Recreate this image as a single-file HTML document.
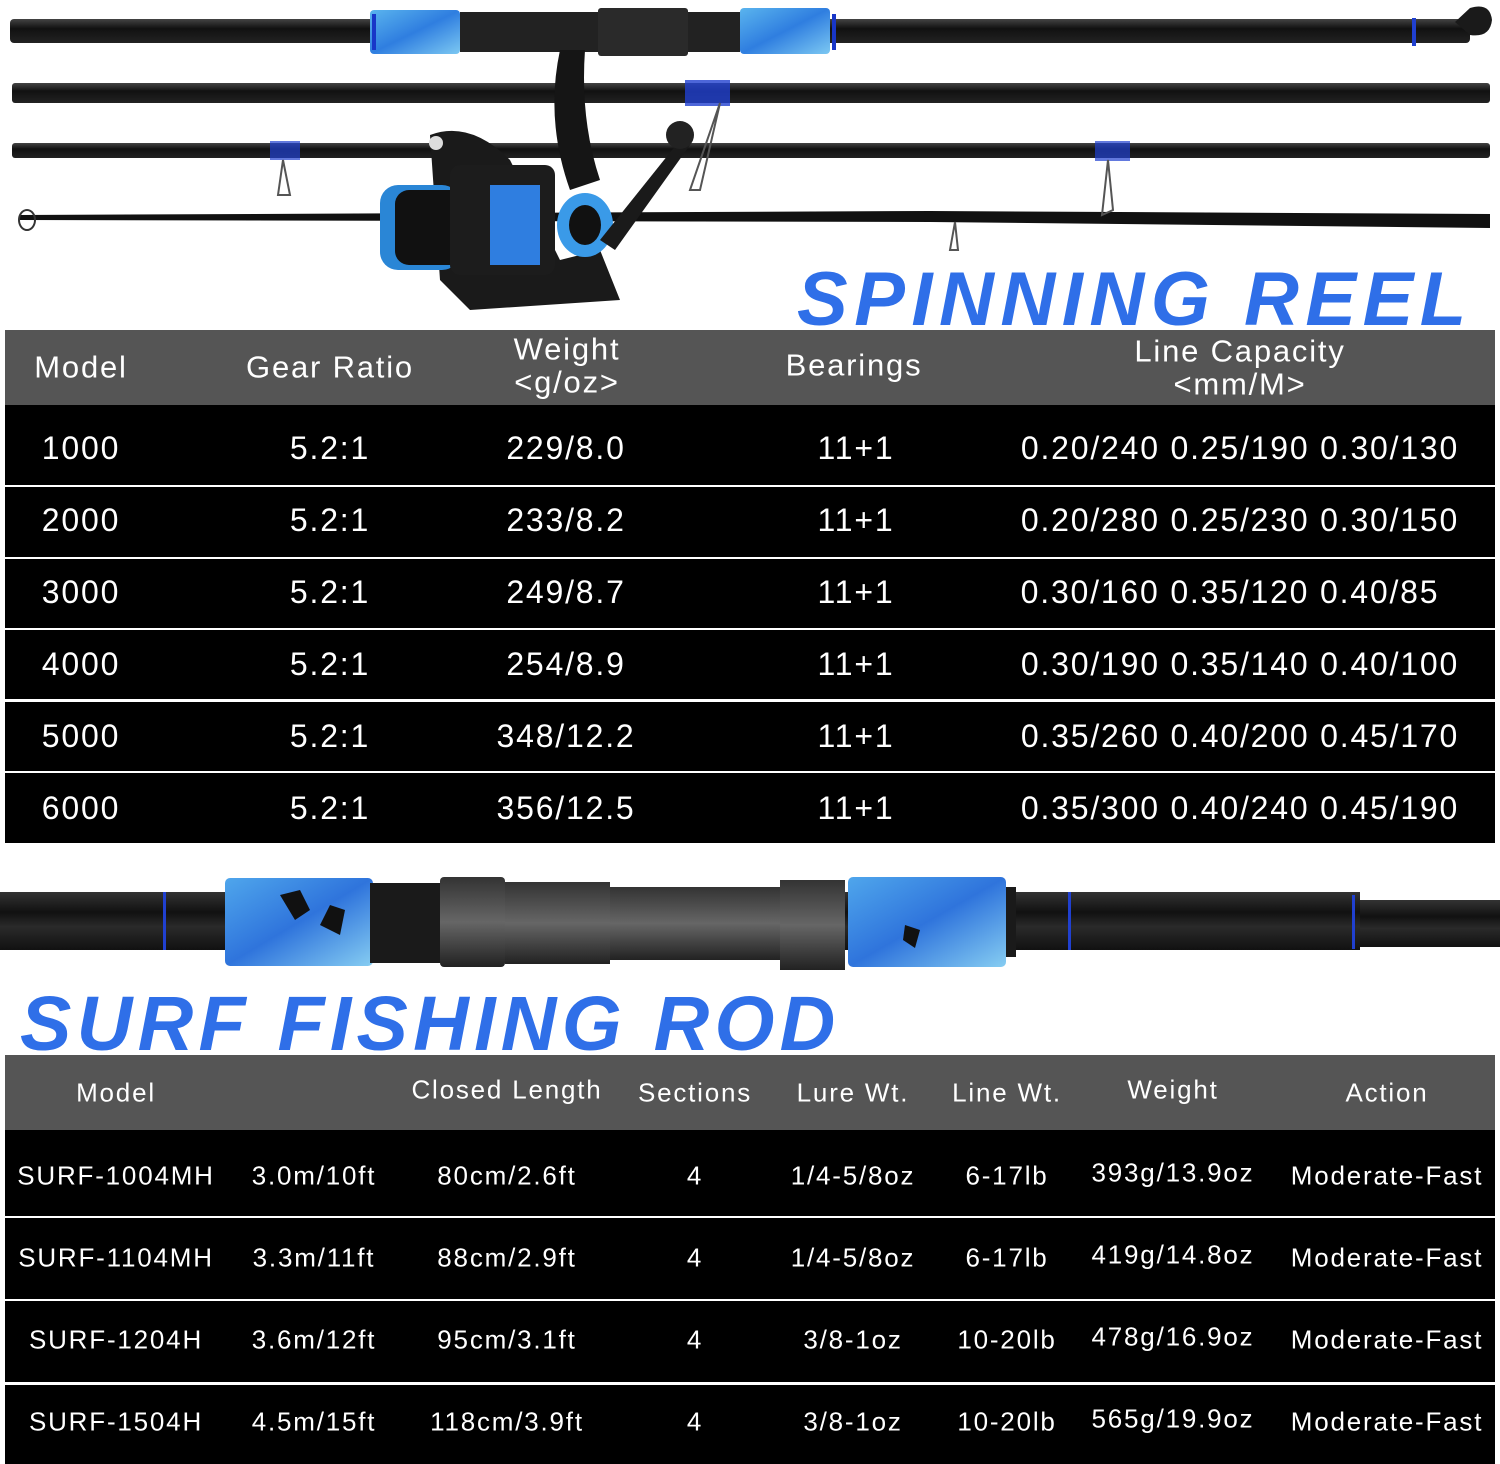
<!DOCTYPE html>
<html><head><meta charset="utf-8"><style>
*{margin:0;padding:0;box-sizing:border-box}
body{width:1500px;height:1464px;background:#fff;position:relative;overflow:hidden;font-family:"Liberation Sans",Arial,sans-serif}
.t{position:absolute;color:#fff;white-space:nowrap;text-align:center;transform:translate(-50%,-50%);line-height:1.05;letter-spacing:1.8px}
.bar{position:absolute;left:5px;width:1490px}
.title{position:absolute;color:#2f6fe8;font-weight:bold;font-style:italic;white-space:nowrap}
</style></head><body>
<svg width="1500" height="330" style="position:absolute;left:0;top:0">
<defs>
<linearGradient id="rg" x1="0" y1="0" x2="0" y2="1"><stop offset="0" stop-color="#444"/><stop offset=".4" stop-color="#111"/><stop offset="1" stop-color="#222"/></linearGradient>
<linearGradient id="bg" x1="0" y1="0" x2="1" y2="1"><stop offset="0" stop-color="#5ab4ee"/><stop offset=".5" stop-color="#2f7ee0"/><stop offset="1" stop-color="#7cc8f2"/></linearGradient>
</defs>
<rect x="10" y="19" width="1460" height="24" rx="4" fill="url(#rg)"/>
<path d="M1455 22 L1470 8 Q1490 2 1492 20 Q1490 38 1470 35 Z" fill="#1a1a1a"/>
<rect x="1412" y="18" width="4" height="28" fill="#2040d0"/>
<rect x="370" y="10" width="90" height="44" rx="4" fill="url(#bg)"/>
<rect x="460" y="12" width="280" height="40" fill="#222"/>
<rect x="598" y="8" width="90" height="48" rx="3" fill="#2a2a2a"/>
<rect x="740" y="8" width="90" height="46" rx="4" fill="url(#bg)"/>
<rect x="372" y="14" width="4" height="36" fill="#1836c8"/>
<rect x="832" y="14" width="4" height="36" fill="#1836c8"/>
<rect x="12" y="83" width="1478" height="20" rx="3" fill="url(#rg)"/>
<rect x="685" y="80" width="45" height="26" fill="#2040d0" opacity=".8"/>
<rect x="12" y="143" width="1478" height="15" rx="3" fill="url(#rg)"/>
<rect x="270" y="141" width="30" height="19" fill="#2040d0" opacity=".7"/>
<rect x="1095" y="141" width="35" height="20" fill="#2040d0" opacity=".7"/>
<path d="M20 215 L930 211 L1490 214 L1490 228 L930 222 L20 220 Z" fill="#111"/>
<ellipse cx="27" cy="220" rx="8" ry="10" fill="none" stroke="#333" stroke-width="2"/>
<path d="M283 160 L278 195 L290 195 Z M1108 160 L1102 215 L1113 210 Z M955 222 L950 250 L958 250 Z M720 103 L690 190 L700 190 Z" fill="none" stroke="#555" stroke-width="2"/>
<path d="M560 50 Q545 120 570 190 L600 180 Q580 120 585 50 Z" fill="#151515"/>
<path d="M430 135 Q470 120 510 160 L560 260 L600 250 L620 300 L470 310 L440 280 Z" fill="#1a1a1a"/>
<rect x="380" y="185" width="80" height="85" rx="18" fill="#2a86d6"/>
<rect x="395" y="190" width="70" height="75" rx="14" fill="#111"/>
<rect x="450" y="165" width="105" height="110" rx="10" fill="#1c1c1c"/>
<rect x="490" y="185" width="50" height="80" fill="#2f7ee0"/>
<ellipse cx="585" cy="225" rx="28" ry="32" fill="#3a9ae8"/>
<ellipse cx="585" cy="225" rx="16" ry="20" fill="#111"/>
<path d="M600 240 L680 140 L690 145 L615 250 Z" fill="#1a1a1a"/>
<circle cx="680" cy="135" r="14" fill="#222"/>
<circle cx="436" cy="143" r="7" fill="#ddd"/>
</svg>
<div class="title" style="left:797px;top:256px;font-size:76px;letter-spacing:6.5px">SPINNING REEL</div>

<div class="bar" style="top:330px;height:75px;background:#555"></div>
<div class="bar" style="top:405px;height:80px;background:#000"></div>
<div class="bar" style="top:487px;height:70px;background:#000"></div>
<div class="bar" style="top:559px;height:69px;background:#000"></div>
<div class="bar" style="top:630px;height:69px;background:#000"></div>
<div class="bar" style="top:702px;height:69px;background:#000"></div>
<div class="bar" style="top:773px;height:70px;background:#000"></div>

<div style="font-size:31px">
<div class="t" style="left:81px;top:368px">Model</div>
<div class="t" style="left:330px;top:368px">Gear Ratio</div>
<div class="t" style="left:567px;top:366px">Weight<br>&lt;g/oz&gt;</div>
<div class="t" style="left:854px;top:366px">Bearings</div>
<div class="t" style="left:1240px;top:368px">Line Capacity<br>&lt;mm/M&gt;</div>
</div>
<div style="font-size:32px">
<div class="t" style="left:81px;top:449px">1000</div><div class="t" style="left:330px;top:449px">5.2:1</div><div class="t" style="left:566px;top:449px">229/8.0</div><div class="t" style="left:856px;top:449px">11+1</div><div class="t" style="left:1240px;top:449px">0.20/240 0.25/190 0.30/130</div>
<div class="t" style="left:81px;top:521px">2000</div><div class="t" style="left:330px;top:521px">5.2:1</div><div class="t" style="left:566px;top:521px">233/8.2</div><div class="t" style="left:856px;top:521px">11+1</div><div class="t" style="left:1240px;top:521px">0.20/280 0.25/230 0.30/150</div>
<div class="t" style="left:81px;top:593px">3000</div><div class="t" style="left:330px;top:593px">5.2:1</div><div class="t" style="left:566px;top:593px">249/8.7</div><div class="t" style="left:856px;top:593px">11+1</div><div class="t" style="left:1230px;top:593px">0.30/160 0.35/120 0.40/85</div>
<div class="t" style="left:81px;top:665px">4000</div><div class="t" style="left:330px;top:665px">5.2:1</div><div class="t" style="left:566px;top:665px">254/8.9</div><div class="t" style="left:856px;top:665px">11+1</div><div class="t" style="left:1240px;top:665px">0.30/190 0.35/140 0.40/100</div>
<div class="t" style="left:81px;top:737px">5000</div><div class="t" style="left:330px;top:737px">5.2:1</div><div class="t" style="left:566px;top:737px">348/12.2</div><div class="t" style="left:856px;top:737px">11+1</div><div class="t" style="left:1240px;top:737px">0.35/260 0.40/200 0.45/170</div>
<div class="t" style="left:81px;top:809px">6000</div><div class="t" style="left:330px;top:809px">5.2:1</div><div class="t" style="left:566px;top:809px">356/12.5</div><div class="t" style="left:856px;top:809px">11+1</div><div class="t" style="left:1240px;top:809px">0.35/300 0.40/240 0.45/190</div>
</div>

<svg width="1500" height="110" style="position:absolute;left:0;top:865px">
<defs>
<linearGradient id="rg2" x1="0" y1="0" x2="0" y2="1"><stop offset="0" stop-color="#333"/><stop offset=".35" stop-color="#111"/><stop offset=".6" stop-color="#2a2a2a"/><stop offset="1" stop-color="#111"/></linearGradient>
<linearGradient id="gs" x1="0" y1="0" x2="0" y2="1"><stop offset="0" stop-color="#333"/><stop offset=".5" stop-color="#666"/><stop offset="1" stop-color="#222"/></linearGradient>
<linearGradient id="bg2" x1="0" y1="0" x2="1" y2="1"><stop offset="0" stop-color="#4fa6ec"/><stop offset=".5" stop-color="#2f74dc"/><stop offset="1" stop-color="#86cdf2"/></linearGradient>
</defs>
<rect x="0" y="27" width="1360" height="58" fill="url(#rg2)"/>
<rect x="1360" y="35" width="140" height="47" fill="url(#rg2)"/>
<rect x="163" y="27" width="3" height="58" fill="#2040d0"/>
<rect x="1068" y="27" width="3" height="58" fill="#2040d0"/>
<rect x="1352" y="30" width="3" height="54" fill="#2040d0"/>
<rect x="225" y="13" width="148" height="88" rx="5" fill="url(#bg2)"/>
<path d="M280 30 l20 -5 l10 20 l-15 10 Z M330 40 l15 5 l-5 25 l-20 -10 Z" fill="#111"/>
<rect x="370" y="18" width="70" height="80" fill="#1a1a1a"/>
<rect x="440" y="12" width="65" height="90" rx="4" fill="url(#gs)"/>
<rect x="505" y="17" width="105" height="82" fill="url(#gs)"/>
<rect x="610" y="22" width="170" height="73" fill="url(#gs)"/>
<rect x="780" y="15" width="65" height="90" fill="url(#gs)"/>
<rect x="848" y="12" width="158" height="90" rx="5" fill="url(#bg2)"/>
<path d="M905 60 l15 5 l-5 18 l-12 -8 Z" fill="#111"/>
<rect x="1006" y="22" width="10" height="70" fill="#1a1a1a"/>
</svg>

<div class="title" style="left:20px;top:980px;font-size:77px;letter-spacing:5.3px">SURF FISHING ROD</div>

<div class="bar" style="top:1055px;height:75px;background:#555"></div>
<div class="bar" style="top:1130px;height:86px;background:#000"></div>
<div class="bar" style="top:1218px;height:81px;background:#000"></div>
<div class="bar" style="top:1301px;height:81px;background:#000"></div>
<div class="bar" style="top:1385px;height:79px;background:#000"></div>

<div style="font-size:26px">
<div class="t" style="left:116px;top:1093px">Model</div>
<div class="t" style="left:507px;top:1090px">Closed Length</div>
<div class="t" style="left:695px;top:1093px">Sections</div>
<div class="t" style="left:853px;top:1093px">Lure Wt.</div>
<div class="t" style="left:1007px;top:1093px">Line Wt.</div>
<div class="t" style="left:1173px;top:1090px">Weight</div>
<div class="t" style="left:1387px;top:1093px">Action</div>

<div class="t" style="left:116px;top:1176px">SURF-1004MH</div><div class="t" style="left:314px;top:1176px">3.0m/10ft</div><div class="t" style="left:507px;top:1176px">80cm/2.6ft</div><div class="t" style="left:695px;top:1176px">4</div><div class="t" style="left:853px;top:1176px">1/4-5/8oz</div><div class="t" style="left:1007px;top:1176px">6-17lb</div><div class="t" style="left:1173px;top:1173px">393g/13.9oz</div><div class="t" style="left:1387px;top:1176px">Moderate-Fast</div>
<div class="t" style="left:116px;top:1258px">SURF-1104MH</div><div class="t" style="left:314px;top:1258px">3.3m/11ft</div><div class="t" style="left:507px;top:1258px">88cm/2.9ft</div><div class="t" style="left:695px;top:1258px">4</div><div class="t" style="left:853px;top:1258px">1/4-5/8oz</div><div class="t" style="left:1007px;top:1258px">6-17lb</div><div class="t" style="left:1173px;top:1255px">419g/14.8oz</div><div class="t" style="left:1387px;top:1258px">Moderate-Fast</div>
<div class="t" style="left:116px;top:1340px">SURF-1204H</div><div class="t" style="left:314px;top:1340px">3.6m/12ft</div><div class="t" style="left:507px;top:1340px">95cm/3.1ft</div><div class="t" style="left:695px;top:1340px">4</div><div class="t" style="left:853px;top:1340px">3/8-1oz</div><div class="t" style="left:1007px;top:1340px">10-20lb</div><div class="t" style="left:1173px;top:1337px">478g/16.9oz</div><div class="t" style="left:1387px;top:1340px">Moderate-Fast</div>
<div class="t" style="left:116px;top:1422px">SURF-1504H</div><div class="t" style="left:314px;top:1422px">4.5m/15ft</div><div class="t" style="left:507px;top:1422px">118cm/3.9ft</div><div class="t" style="left:695px;top:1422px">4</div><div class="t" style="left:853px;top:1422px">3/8-1oz</div><div class="t" style="left:1007px;top:1422px">10-20lb</div><div class="t" style="left:1173px;top:1419px">565g/19.9oz</div><div class="t" style="left:1387px;top:1422px">Moderate-Fast</div>
</div>
</body></html>
